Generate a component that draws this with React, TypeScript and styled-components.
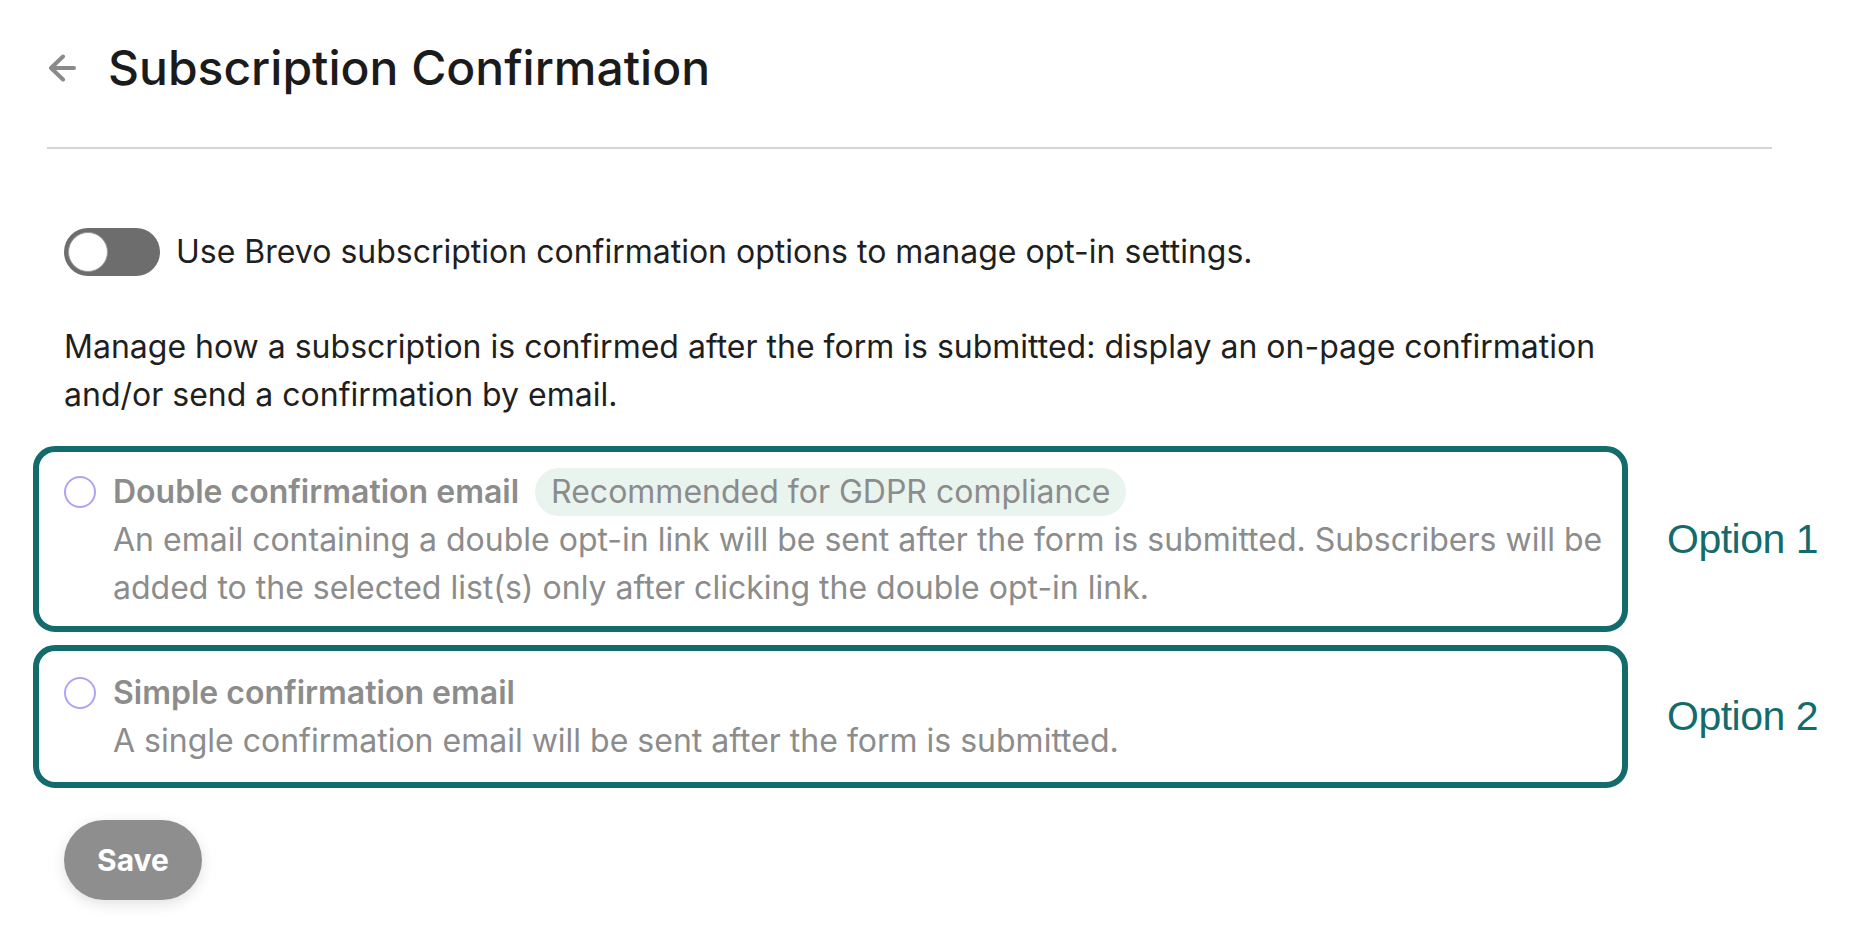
import React from "react";
import styled, { createGlobalStyle } from "styled-components";

const GlobalStyle = createGlobalStyle`
  html, body {
    margin: 0;
    padding: 0;
    background: #ffffff;
  }
  body {
    font-family: Inter, "Noto Sans", "Liberation Sans", sans-serif;
    color: #1f1f1f;
  }
  * { box-sizing: border-box; }
`;

const Page = styled.div`
  display: flex;
  flex-direction: column;
  width: 1858px;
  min-height: 942px;
`;

const Header = styled.header`
  display: flex;
  align-items: center;
  gap: 32px;
  height: 64px;
  margin: 36px 0 0 48px;
`;

const BackButton = styled.button`
  display: flex;
  align-items: center;
  justify-content: center;
  width: 28px;
  height: 28px;
  padding: 0;
  border: none;
  background: none;
  color: #8a8a8a;
  cursor: pointer;
`;

const Title = styled.h1`
  margin: 0;
  font-size: 48px;
  line-height: 64px;
  font-weight: 500;
  color: #1b1b1b;
`;

const Divider = styled.hr`
  margin: 47px 86px 0 47px;
  height: 2px;
  border: none;
  background: #d6d6d6;
`;

const Body = styled.main`
  display: flex;
  flex-direction: column;
  align-items: flex-start;
  padding-left: 33px;
`;

const ToggleRow = styled.label`
  display: flex;
  align-items: center;
  gap: 16px;
  margin: 79px 0 0 31px;
  font-size: 32px;
  line-height: 48px;
  color: #1f1f1f;
`;

const Toggle = styled.span<{ $on?: boolean }>`
  display: flex;
  align-items: center;
  justify-content: ${(p) => (p.$on ? "flex-end" : "flex-start")};
  width: 96px;
  height: 48px;
  padding: 4px;
  border-radius: 24px;
  background: #6d6d6d;
`;

const Knob = styled.span`
  width: 40px;
  height: 40px;
  border-radius: 50%;
  background: #ffffff;
  border: 1.5px solid #9a9a9a;
`;

const Description = styled.p`
  width: 1560px;
  margin: 47px 0 0 31px;
  font-size: 32px;
  line-height: 48px;
  color: #1f1f1f;
`;

const OptionList = styled.div`
  display: flex;
  flex-direction: column;
  gap: 13px;
  margin-top: 27px;
`;

const OptionRow = styled.div`
  display: flex;
  align-items: center;
  gap: 39px;
`;

const OptionBox = styled.div<{ $padTop: number; $padBottom: number }>`
  display: grid;
  grid-template-columns: 32px 1fr;
  column-gap: 17px;
  width: 1595px;
  padding: ${(p) => `${p.$padTop}px 8px ${p.$padBottom}px 25px`};
  border: 6px solid #136b6b;
  border-radius: 22px;
`;

const Radio = styled.span`
  width: 32px;
  height: 32px;
  margin-top: 8px;
  border-radius: 50%;
  border: 2px solid #ada5f3;
  background: #ffffff;
`;

const OptionText = styled.div`
  display: flex;
  flex-direction: column;
  font-size: 32px;
  line-height: 48px;
  color: #8c8c8c;
`;

const OptionHeading = styled.div`
  display: flex;
  align-items: center;
  gap: 16px;
`;

const OptionTitle = styled.span`
  font-weight: 600;
`;

const Badge = styled.span`
  display: inline-flex;
  align-items: center;
  height: 48px;
  padding: 0 16px;
  border-radius: 24px;
  background: #e9f4ef;
  color: #8c8c8c;
  font-weight: 400;
`;

const OptionLabel = styled.span`
  font-family: "Liberation Sans", Arial, sans-serif;
  font-size: 41px;
  color: #136b6b;
  letter-spacing: -0.5px;
`;

const SaveButton = styled.button`
  margin: 32px 0 0 31px;
  height: 80px;
  padding: 0 33px;
  border: none;
  border-radius: 40px;
  background: #8e8e8e;
  color: #ffffff;
  font-family: Inter, "Noto Sans", sans-serif;
  font-size: 30px;
  font-weight: 700;
  box-shadow: 0 4px 14px rgba(0, 0, 0, 0.12);
  cursor: pointer;
`;

const BackArrow = () => (
  <svg width="28" height="28" viewBox="0 0 28 28" fill="none">
    <path
      d="M26 14H3M15 2.5L3 14L15 25.5"
      stroke="currentColor"
      strokeWidth="4"
      strokeLinecap="round"
      strokeLinejoin="round"
    />
  </svg>
);

type Option = {
  title: string;
  badge?: string;
  text: string;
  label: string;
  padTop: number;
  padBottom: number;
};

const options: Option[] = [
  {
    title: "Double confirmation email",
    badge: "Recommended for GDPR compliance",
    text:
      "An email containing a double opt-in link will be sent after the form is submitted. Subscribers will be added to the selected list(s) only after clicking the double opt-in link.",
    label: "Option 1",
    padTop: 16,
    padBottom: 14,
  },
  {
    title: "Simple confirmation email",
    text: "A single confirmation email will be sent after the form is submitted.",
    label: "Option 2",
    padTop: 18,
    padBottom: 17,
  },
];

export default function App() {
  return (
    <>
      <GlobalStyle />
      <Page>
        <Header>
          <BackButton aria-label="Back">
            <BackArrow />
          </BackButton>
          <Title>Subscription Confirmation</Title>
        </Header>
        <Divider />
        <Body>
          <ToggleRow>
            <Toggle>
              <Knob />
            </Toggle>
            Use Brevo subscription confirmation options to manage opt-in settings.
          </ToggleRow>
          <Description>
            Manage how a subscription is confirmed after the form is submitted: display an
            on-page confirmation and/or send a confirmation by email.
          </Description>
          <OptionList>
            {options.map((o) => (
              <OptionRow key={o.label}>
                <OptionBox $padTop={o.padTop} $padBottom={o.padBottom}>
                  <Radio />
                  <OptionText>
                    <OptionHeading>
                      <OptionTitle>{o.title}</OptionTitle>
                      {o.badge && <Badge>{o.badge}</Badge>}
                    </OptionHeading>
                    <span>{o.text}</span>
                  </OptionText>
                </OptionBox>
                <OptionLabel>{o.label}</OptionLabel>
              </OptionRow>
            ))}
          </OptionList>
          <SaveButton>Save</SaveButton>
        </Body>
      </Page>
    </>
  );
}
